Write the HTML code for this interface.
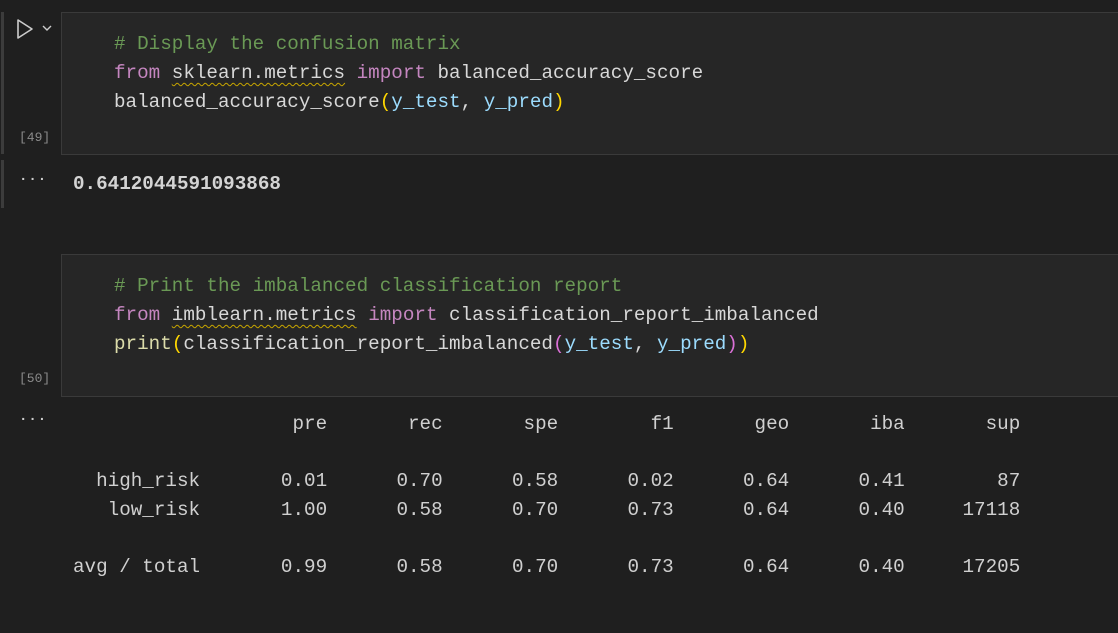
<!DOCTYPE html>
<html><head><style>
body{margin:0;width:1118px;height:633px;background:#1f1f1f;overflow:hidden;position:relative;font-family:"Liberation Mono",monospace;}
.cell{position:absolute;left:61px;right:-2px;background:#262626;border:1px solid #3a3a3a;}
.code{position:absolute;left:114px;font-size:19.25px;line-height:29px;color:#d8d8d8;white-space:pre;}
.c{color:#6a9955}.k{color:#c586c0}.v{color:#9cdcfe}.y{color:#ffd700}.p{color:#da70d6}.f{color:#dcdcaa}
.sq{text-decoration:underline wavy #c8a600;text-decoration-thickness:1px;text-underline-offset:4px}
.num{position:absolute;left:19px;font-size:13px;color:#8a8a8a;}
.bar{position:absolute;left:1px;width:3px;background:#3c3c3c;}
.out{position:absolute;left:73px;font-size:19.25px;line-height:28.5px;color:#d0d0d0;white-space:pre;}
.dots{position:absolute;left:19px;color:#cccccc;font-size:14px;font-weight:bold;letter-spacing:1px}
</style></head><body>
<div class="bar" style="top:12px;height:142px"></div>
<div class="bar" style="top:160px;height:48px"></div>
<svg style="position:absolute;left:14px;top:18px" width="44" height="24"><path d="M4 2 L18 11 L4 20 Z" fill="none" stroke="#cccccc" stroke-width="1.6" stroke-linejoin="round"/><path d="M29 8 L33 12 L37 8" fill="none" stroke="#cccccc" stroke-width="1.4"/></svg>
<div class="cell" style="top:12px;height:141px"></div>
<div class="code" style="top:30px"><span class="c"># Display the confusion matrix</span>
<span class="k">from</span> <span class="sq">sklearn.metrics</span> <span class="k">import</span> balanced_accuracy_score
balanced_accuracy_score<span class="y">(</span><span class="v">y_test</span>, <span class="v">y_pred</span><span class="y">)</span></div>
<div class="num" style="top:130px">[49]</div>
<div class="dots" style="top:172px">···</div>
<div class="out" style="top:170px;font-weight:bold;color:#d4d4d4">0.6412044591093868</div>
<div class="cell" style="top:254px;height:141px"></div>
<div class="code" style="top:272px"><span class="c"># Print the imbalanced classification report</span>
<span class="k">from</span> <span class="sq">imblearn.metrics</span> <span class="k">import</span> classification_report_imbalanced
<span class="f">print</span><span class="y">(</span>classification_report_imbalanced<span class="p">(</span><span class="v">y_test</span>, <span class="v">y_pred</span><span class="p">)</span><span class="y">)</span></div>
<div class="num" style="top:371px">[50]</div>
<div class="dots" style="top:412px">···</div>
<div class="out" style="top:410px">                   pre       rec       spe        f1       geo       iba       sup

  high_risk       0.01      0.70      0.58      0.02      0.64      0.41        87
   low_risk       1.00      0.58      0.70      0.73      0.64      0.40     17118

avg / total       0.99      0.58      0.70      0.73      0.64      0.40     17205</div>
</body></html>
